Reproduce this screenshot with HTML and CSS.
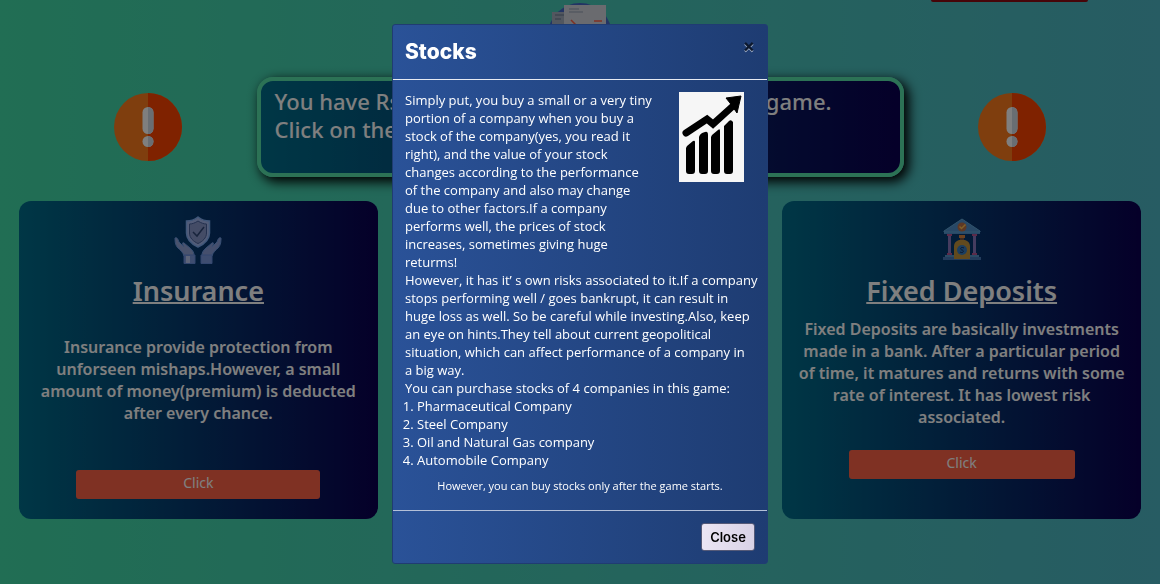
FILE: index.html
```html
<!DOCTYPE html>
<html lang="en">
<head>
<meta charset="utf-8">
<meta name="viewport" content="width=device-width, initial-scale=1">
<title>Stocks</title>
<link rel="stylesheet" href="styles.css">
</head>
<body>
<div class="page">
  <header class="topbar">
    <svg class="report-icon" viewBox="0 0 64 64" aria-hidden="true">
      <circle cx="32" cy="32" r="32" fill="#4668c8"/>
      <path d="M4 9h16v44H4z" fill="#a4aebe"/>
      <path d="M7 12h9M7 16h6" stroke="#66788e" stroke-width="1"/>
      <path d="M16 2h42v50H16z" fill="#d4d6de"/>
      <path d="M21 6h10M21 9h14" stroke="#93a0b4" stroke-width="1"/>
      <path d="M23 17l5 5M46 18h8" stroke="#ff6347" stroke-width="1.6"/>
    </svg>
    <div class="red-bar"></div>
  </header>

  <section class="notice">
    <svg class="alert-icon" viewBox="0 0 68 68" aria-hidden="true">
      <circle cx="34" cy="34" r="34" fill="#ff7c1c"/>
      <path d="M34 0a34 34 0 0 1 0 68z" fill="#ff4400"/>
      <rect x="28.500" y="14" width="11" height="27" rx="5.500" fill="#fff"/>
      <circle cx="34" cy="48.500" r="5.500" fill="#fff"/>
      <path d="M34 14a5.500 5.500 0 0 1 5.500 5.500v16a5.500 5.500 0 0 1-5.500 5.500zM34 43a5.500 5.500 0 0 1 0 11z" fill="#d2dce6"/>
    </svg>
    <div class="banner">
      <p class="banner-line"><span>You have Rs</span><span>game.</span></p>
      <p class="banner-line">Click on the</p>
    </div>
    <svg class="alert-icon" viewBox="0 0 68 68" aria-hidden="true">
      <circle cx="34" cy="34" r="34" fill="#ff7c1c"/>
      <path d="M34 0a34 34 0 0 1 0 68z" fill="#ff4400"/>
      <rect x="28.500" y="14" width="11" height="27" rx="5.500" fill="#fff"/>
      <circle cx="34" cy="48.500" r="5.500" fill="#fff"/>
      <path d="M34 14a5.500 5.500 0 0 1 5.500 5.500v16a5.500 5.500 0 0 1-5.500 5.500zM34 43a5.500 5.500 0 0 1 0 11z" fill="#d2dce6"/>
    </svg>
  </section>

  <main class="cards">
    <article class="card card-insurance">
      <svg class="card-icon" viewBox="0 0 48 48" aria-hidden="true">
        <path d="M24 1C20 4 16 5 12.500 5v12c0 6 5 11 11.500 14 6.500-3 11.500-8 11.500-14V5C32 5 28 4 24 1z" fill="#a4b8f0" stroke="#80aef4" stroke-width="1.500"/>
        <path d="M24 5c-3 2-6 3-8.500 3v9c0 5 4 8.500 8.500 10.500 4.500-2 8.500-5.500 8.500-10.500V8C30 8 27 7 24 5z" fill="#8898cc" stroke="#48629e" stroke-width="1"/>
        <path d="M19 16l4 4 7-9" fill="none" stroke="#304878" stroke-width="1.500"/>
        <path d="M1 22c2-1 3 1 4 4l5 5c-2-3-2-5 0-4l6 5c3 3 4 4 4 8H10c-1-4-4-6-6-8-3-3-3-7-3-10z" fill="#94a6da" stroke="#6e9ce6"/>
        <path d="M47 22c-2-1-3 1-4 4l-5 5c2-3 2-5 0-4l-6 5c-3 3-4 4-4 8h10c1-4 4-6 6-8 3-3 3-7 3-10z" fill="#8a9eda" stroke="#6e9ce6"/>
        <path d="M10 39h11v8.500H10zM27 39h11v8.500H27z" fill="#7c9ae0" stroke="#668cdc"/>
        <path d="M12 40h4v7h-4z" fill="#bccaf2"/>
      </svg>
      <h2 class="card-title">Insurance</h2>
      <p class="card-text">Insurance provide protection from<br>unforseen mishaps.However, a small<br>amount of money(premium) is deducted<br>after every chance.</p>
      <button class="card-button" type="button">Click</button>
    </article>

    <article class="card card-deposits">
      <svg class="card-icon" viewBox="0 0 48 48" aria-hidden="true">
        <path d="M24 3L6 15v3h36v-3z" fill="#5190cc"/>
        <path d="M24 3L6 15v1h36v-1z" fill="none" stroke="#62a8d8"/>
        <circle cx="24" cy="11" r="4.500" fill="#bc7048"/>
        <path d="M21.500 10.500l2 2 4-4" fill="none" stroke="#ffc052" stroke-width="1.500"/>
        <path d="M9 18h5v2H9zM34 18h5v2h-5zM9 37h5v2H9zM34 37h5v2h-5z" fill="#b85490"/>
        <path d="M10 20h3v17h-3zM35 20h3v17h-3z" fill="#8a78be"/>
        <path d="M7 39h34v3H7z" fill="#5794ca"/>
        <path d="M5 41h38v3H5z" fill="#4679b8"/>
        <path d="M21 19h6v3h-6z" fill="#d88440"/>
        <path d="M22 22h4v3h-4z" fill="#7b5442"/>
        <path d="M21 24h6c3 1 5 3 5 6v13H16V30c0-3 2-5 5-6z" fill="#c4953c"/>
        <circle cx="24" cy="34" r="5" fill="#377dc0"/>
        <path d="M26 32c-4-2-4 2-2 2s2 4-2 2" fill="none" stroke="#142d60"/>
      </svg>
      <h2 class="card-title">Fixed Deposits</h2>
      <p class="card-text">Fixed Deposits are basically investments<br>made in a bank. After a particular period<br>of time, it matures and returns with some<br>rate of interest. It has lowest risk<br>associated.</p>
      <button class="card-button" type="button">Click</button>
    </article>
  </main>
</div>

<div class="backdrop">
  <div class="modal" role="dialog" aria-modal="true" aria-labelledby="modal-title">
    <div class="modal-header">
      <h1 class="modal-title" id="modal-title">Stocks</h1>
      <button class="dismiss" type="button" aria-label="Dismiss">×</button>
    </div>
    <div class="modal-body">
      <svg class="chart" viewBox="0 0 65 90" role="img" aria-label="Rising bar chart">
        <path d="M0 0h65v90H0z" fill="#f6f6f6"/>
        <path d="M7 41L28 27l6 5 20-18" fill="none" stroke="#000" stroke-width="7" stroke-linecap="round"/>
        <path d="M62 4L47 6l4 5 7 10z" fill="#000" stroke="#000" stroke-width="1" stroke-linejoin="round"/>
        <path d="M8 54l6-5q2-1 2 1v29q0 3-3 3h-3q-3 0-3-3V56zM20 45q1-4 6-5 3-1 3 3v36q0 3-3 3h-3q-3 0-3-3zM33 43l6-5q2-2 2 1v40q0 3-3 3h-3q-3 0-3-3V45zM45 34l5-5q2-2 4 1v49q0 3-3 3h-3q-3 0-3-3z" fill="#000"/>
      </svg>
      <p>Simply put, you buy a small or a very tiny<br>portion of a company when you buy a<br>stock of the company(yes, you read it<br>right), and the value of your stock<br>changes according to the performance<br>of the company and also may change<br>due to other factors.If a company<br>performs well, the prices of stock<br>increases, sometimes giving huge<br>returms!</p>
      <p>However, it has it’ s own risks associated to it.If a company<br>stops performing well / goes bankrupt, it can result in<br>huge loss as well. So be careful while investing.Also, keep<br>an eye on hints.They tell about current geopolitical<br>situation, which can affect performance of a company in<br>a big way.</p>
      <p>You can purchase stocks of 4 companies in this game:</p>
      <ol class="companies">
        <li>Pharmaceutical Company</li>
        <li>Steel Company</li>
        <li>Oil and Natural Gas company</li>
        <li>Automobile Company</li>
      </ol>
      <p class="note">However, you can buy stocks only after the game starts.</p>
    </div>
    <div class="modal-footer">
      <button class="close-button" type="button">Close</button>
    </div>
  </div>
</div>
</body>
</html>
```

FILE: styles.css
```css
* { box-sizing: border-box; }

body {
  margin: 0;
  min-height: 100vh;
  overflow: hidden;
  background: linear-gradient(to right, #42dca8, #4eb8c6);
  color: #fff;
  font-family: "Noto Sans", "Open Sans", sans-serif;
}

h1, h2, p, ol { margin: 0; }

button { font-family: inherit; cursor: pointer; }

.topbar {
  display: grid;
  grid-template-columns: 1fr 64px 1fr;
  align-items: start;
  height: 77px;
  padding: 0 72px;
}

.report-icon {
  grid-column: 2;
  width: 64px;
  height: 64px;
  margin-top: 3px;
}

.red-bar {
  justify-self: end;
  width: 157px;
  height: 2px;
  border-radius: 0 0 4px 4px;
  background: #8c0a12;
}

.notice {
  display: flex;
  align-items: center;
  justify-content: space-between;
  padding: 0 114px;
}

.alert-icon {
  flex: none;
  width: 68px;
  height: 68px;
}

.banner {
  width: 647px;
  height: 100px;
  padding: 6px 68px 8px 14px;
  border: 4px solid #58e4aa;
  border-radius: 16px;
  background: linear-gradient(to right, #006e8c, #0a0052);
  box-shadow: 4px 4px 12px 1px #000;
  font-size: 22px;
  font-weight: 500;
  line-height: 28px;
}

.banner-line {
  display: flex;
  justify-content: space-between;
}

.cards {
  display: grid;
  grid-template-columns: repeat(3, 1fr);
  gap: 23px;
  padding: 24px 19px;
}

.card {
  display: flex;
  flex-direction: column;
  align-items: center;
  height: 318px;
  padding-top: 15px;
  border-radius: 12px;
  background: linear-gradient(to right, #006e8c, #0a0052);
  text-align: center;
}

.card-deposits { grid-column: 3; }

.card-icon {
  width: 48px;
  height: 48px;
}

.card-title {
  margin-top: 9px;
  font-size: 27px;
  font-weight: 600;
  line-height: 36px;
  text-decoration: underline;
  text-decoration-thickness: 2px;
}

.card-text {
  font-size: 16px;
  font-weight: 600;
  line-height: 22px;
  white-space: nowrap;
}

.card-insurance .card-text { margin: 27px 0 46px; }
.card-deposits .card-text { margin: 9px 0 22px; }

.card-button {
  width: 68%;
  height: 29px;
  padding: 0 0 4px;
  border: 0;
  border-radius: 3px;
  background: #ff6347;
  color: #fff;
  font-size: 14px;
}

.card-deposits .card-button { width: 63%; }

.backdrop {
  position: fixed;
  inset: 0;
  display: flex;
  align-items: flex-start;
  justify-content: center;
  padding-top: 24px;
  background: rgba(0, 0, 0, 0.5);
}

.modal {
  width: 376px;
  border: 1px solid #203c72;
  border-radius: 3px;
  background: linear-gradient(to right, #2a5298, #1e3c72);
  font-family: Inter, "Open Sans", sans-serif;
  font-size: 13px;
  font-weight: 500;
  line-height: 18px;
}

.modal-header {
  display: flex;
  align-items: flex-start;
  justify-content: space-between;
  padding: 12px;
  border-bottom: 1px solid #e6eaf2;
}

.modal-title {
  font-size: 21px;
  font-weight: 800;
  line-height: 30px;
}

.dismiss {
  padding: 0;
  border: 0;
  background: none;
  color: #000;
  font-size: 18px;
  font-weight: 700;
  line-height: 18px;
  text-shadow: 0 1px 0 #fff;
  opacity: 0.6;
}

.modal-body {
  padding: 11px 12px 15px;
  font-family: "Open Sans", "Noto Sans", sans-serif;
  white-space: nowrap;
}

.chart {
  float: right;
  width: 65px;
  height: 90px;
  margin: 1px 11px 0 0;
}

.companies { padding-left: 12px; }

.note {
  margin-top: 8px;
  font-size: 11px;
  text-align: center;
}

.modal-footer {
  display: flex;
  justify-content: flex-end;
  padding: 12px;
  border-top: 1px solid #b4c0d8;
}

.close-button {
  width: 54px;
  height: 28px;
  padding: 0;
  border: 1px solid #555a78;
  border-radius: 3px;
  background: linear-gradient(to right, #ece6f4, #d8d2e6);
  color: #000;
  font-size: 13px;
  font-weight: 600;
}
```
